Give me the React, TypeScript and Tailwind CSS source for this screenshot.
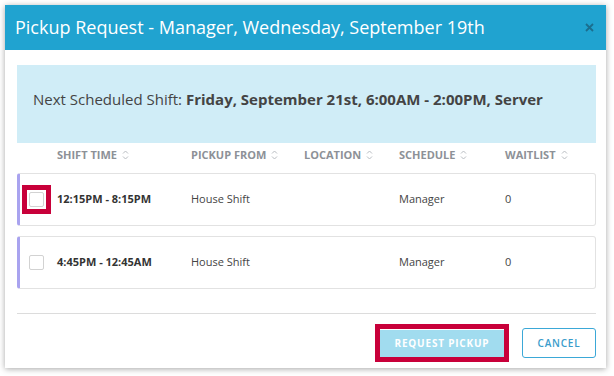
import React from 'react';

const rows = [
    { time: '12:15PM - 8:15PM', from: 'House Shift', location: '', schedule: 'Manager', waitlist: '0', marked: true },
    { time: '4:45PM - 12:45AM', from: 'House Shift', location: '', schedule: 'Manager', waitlist: '0', marked: false },
];

const columns = ['Shift Time', 'Pickup From', 'Location', 'Schedule', 'Waitlist'];

function SortIcon() {
    return (
        <svg width="7" height="10" viewBox="0 0 7 10" className="ml-[5px]" fill="none" stroke="#b9bdc2" strokeWidth="1">
            <path d="M1 3.5 L3.5 1 L6 3.5" />
            <path d="M1 6.5 L3.5 9 L6 6.5" />
        </svg>
    );
}

export default function App() {
    return (
        <div className="w-[614px] h-[376px] bg-white pt-[5px] pl-[5px]" style={{ fontFamily: '"Open Sans", "Liberation Sans", sans-serif' }}>
            <div className="w-[601px] h-[363px] bg-white shadow-[0_1px_6px_rgba(0,0,0,0.35)] flex flex-col">
                {/* Header */}
                <div className="h-[45px] bg-[#20a3d0] flex items-center justify-between pl-[10px] pr-[12px]">
                    <h1 className="text-white text-[18px]">Pickup Request - Manager, Wednesday, September 19th</h1>
                    <svg width="9" height="9" viewBox="0 0 9 9" stroke="#1b6e8e" strokeWidth="1.8">
                        <path d="M1 1 L8 8 M8 1 L1 8" />
                    </svg>
                </div>

                <div className="flex flex-col flex-1 pl-[12px] pr-[10px] pt-[15px]">
                    {/* Next shift info */}
                    <div className="h-[78px] bg-[#d0edf7] flex items-center pl-[16px] pb-[10px] text-[15px] text-[#444]">
                        Next Scheduled Shift:&nbsp;<span className="font-bold">Friday, September 21st, 6:00AM - 2:00PM, Server</span>
                    </div>

                    {/* Table head */}
                    <div className="h-[24px] flex items-center pl-[3px] text-[11px] font-bold uppercase text-[#8d9197]">
                        <div className="w-[37px]" />
                        {columns.map((c, i) => (
                            <div key={c} className={`flex items-center ${['w-[134px]', 'w-[113px]', 'w-[95px]', 'w-[106px]', 'flex-1'][i]}`}>
                                {c}
                                <SortIcon />
                            </div>
                        ))}
                    </div>

                    {/* Rows */}
                    <div className="flex flex-col gap-[10px] mt-[6px]">
                        {rows.map((r) => (
                            <div key={r.time} className="h-[53px] flex items-center border border-[#e2e2e2] border-l-[3px] border-l-[#a9a3ef] rounded-[3px] text-[11px] text-[#444]">
                                <div className="w-[37px] flex items-center pl-[2px]">
                                    <div className={`border-[5px] p-[2px] ${r.marked ? 'border-[#c8003a]' : 'border-transparent'}`}>
                                        <div className="w-[15px] h-[15px] border border-[#d2d2d2] rounded-[2px] bg-white" />
                                    </div>
                                </div>
                                <div className="w-[134px] font-bold text-[11px] text-[#333]">{r.time}</div>
                                <div className="w-[113px]">{r.from}</div>
                                <div className="w-[95px]">{r.location}</div>
                                <div className="w-[106px]">{r.schedule}</div>
                                <div className="flex-1">{r.waitlist}</div>
                            </div>
                        ))}
                    </div>

                    <div className="mt-[24px] border-t border-[#dcdcdc]" />

                    {/* Footer */}
                    <div className="flex justify-end items-center gap-[13px] pt-[10px]">
                        <div className="border-[5px] border-[#c8003a]">
                            <button className="h-[27px] w-[124px] bg-[#a1dcef] text-white text-[10px] font-bold tracking-[0.8px]">
                                REQUEST PICKUP
                            </button>
                        </div>
                        <button className="h-[30px] w-[74px] bg-white border border-[#3ba8d7] rounded-[3px] text-[#3a9ccb] text-[10px] font-semibold tracking-[0.8px]">
                            CANCEL
                        </button>
                    </div>
                </div>
            </div>
        </div>
    );
}
